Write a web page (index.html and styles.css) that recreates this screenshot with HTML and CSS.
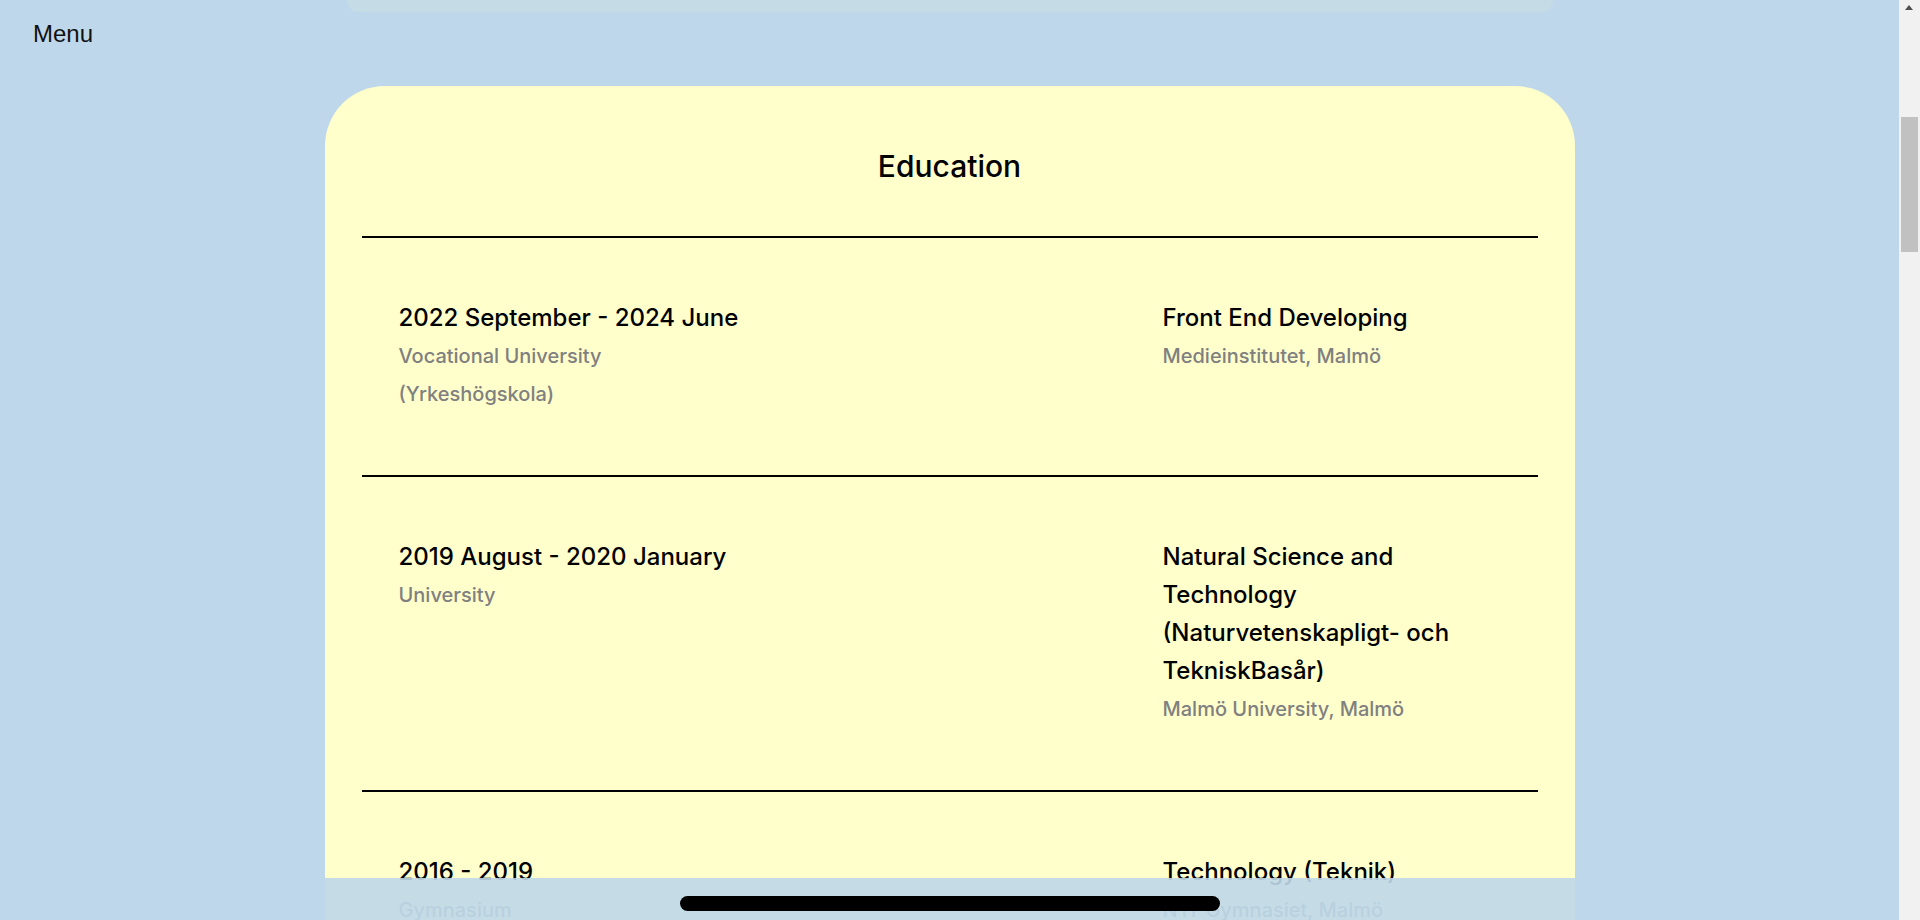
FILE: index.html
```html
<!DOCTYPE html>
<html lang="en">
<head>
<meta charset="utf-8">
<title>Education</title>
<link rel="stylesheet" href="styles.css">
</head>
<body>
<div class="viewport">
  <div class="page">
    <div class="prev-card"></div>
    <button class="menu">Menu</button>
    <section class="card">
      <h2 class="card-title">Education</h2>
      <hr class="divider">
      <div class="edu-row">
        <div class="edu-left">
          <div class="edu-head">2022 September - 2024 June</div>
          <div class="edu-sub">Vocational University<br>(Yrkeshögskola)</div>
        </div>
        <div class="edu-right">
          <div class="edu-head">Front End Developing</div>
          <div class="edu-sub">Medieinstitutet, Malmö</div>
        </div>
      </div>
      <hr class="divider">
      <div class="edu-row">
        <div class="edu-left">
          <div class="edu-head">2019 August - 2020 January</div>
          <div class="edu-sub">University</div>
        </div>
        <div class="edu-right">
          <div class="edu-head">Natural Science and Technology (Naturvetenskapligt- och TekniskBasår)</div>
          <div class="edu-sub">Malmö University, Malmö</div>
        </div>
      </div>
      <hr class="divider">
      <div class="edu-row">
        <div class="edu-left">
          <div class="edu-head">2016 - 2019</div>
          <div class="edu-sub">Gymnasium</div>
        </div>
        <div class="edu-right">
          <div class="edu-head">Technology (Teknik)</div>
          <div class="edu-sub">NTI-Gymnasiet, Malmö</div>
        </div>
      </div>
    </section>
    <div class="bottom-bar"><span class="pill"></span></div>
  </div>
  <div class="scrollbar">
    <span class="scroll-arrow"></span>
    <span class="scroll-thumb"></span>
  </div>
</div>
</body>
</html>
```
FILE: styles.css
```css
html, body {
  margin: 0;
  padding: 0;
  height: 100%;
  overflow: hidden;
}
body {
  background: #bfd7ea;
  font-family: "Inter", "Noto Sans", sans-serif;
  color: #000;
}
.viewport {
  display: flex;
  height: 920px;
}
.page {
  flex: 1;
  position: relative;
  overflow: hidden;
  background: #bfd7ea;
}
.prev-card {
  width: 1206px;
  height: 12px;
  margin: 0 auto;
  background: #c5dce6;
  border-radius: 0 0 28px 28px;
}
.menu {
  position: absolute;
  top: 20px;
  left: 33px;
  margin: 0;
  padding: 0;
  border: none;
  background: none;
  font-family: "Liberation Sans", Arial, sans-serif;
  font-size: 24px;
  line-height: 27px;
  color: #111;
}
.card {
  width: 1250px;
  margin: 74px auto 0;
  box-sizing: border-box;
  padding: 58px 37px 0;
  background: #ffffcc;
  border-radius: 60px 60px 0 0;
  min-height: 900px;
}
.card-title {
  margin: 0;
  text-align: center;
  font-size: 30px;
  font-weight: 500;
  line-height: 45px;
}
.divider {
  margin: 47px 0 0;
  border: none;
  height: 2px;
  background: #000;
}
.card-title + .divider {
  margin-top: 47px;
}
.edu-row + .divider {
  margin-top: 0;
}
.edu-row {
  display: flex;
  justify-content: space-between;
  padding: 61px 65px 62px 37px;
}
.edu-right {
  width: 310px;
}
.edu-head {
  font-size: 24px;
  font-weight: 500;
  line-height: 38px;
}
.edu-sub {
  font-size: 20px;
  font-weight: 500;
  line-height: 38px;
  color: #808080;
}
.bottom-bar {
  position: absolute;
  left: 0;
  right: 0;
  bottom: 0;
  width: 1250px;
  height: 42px;
  margin: 0 auto;
  background: rgba(191, 216, 233, 0.9);
  display: flex;
  justify-content: center;
  align-items: flex-start;
  padding-top: 18px;
  box-sizing: border-box;
}
.pill {
  display: block;
  width: 540px;
  height: 15px;
  border-radius: 8px;
  background: #000;
}
.scrollbar {
  width: 21px;
  flex: none;
  background: #f1f1f1;
  position: relative;
}
.scroll-arrow {
  position: absolute;
  top: 5px;
  left: 6px;
  width: 0;
  height: 0;
  border-left: 4.5px solid transparent;
  border-right: 4.5px solid transparent;
  border-bottom: 5px solid #505050;
}
.scroll-thumb {
  position: absolute;
  top: 117px;
  left: 2px;
  width: 17px;
  height: 135px;
  background: #c1c1c1;
}
```
